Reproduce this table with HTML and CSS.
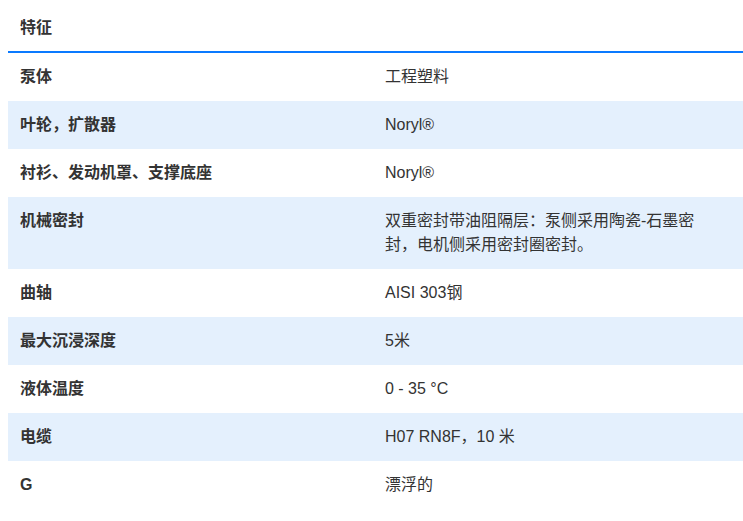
FILE: index.html
```html
<!DOCTYPE html>
<html lang="zh">
<head>
<meta charset="utf-8">
<link rel="stylesheet" href="styles.css">
</head>
<body>
<table class="spec">
  <colgroup>
    <col class="c1">
    <col class="c2">
  </colgroup>
  <thead>
    <tr><th class="head" colspan="2">特征</th></tr>
  </thead>
  <tbody>
    <tr><td class="k">泵体</td><td class="v">工程塑料</td></tr>
    <tr class="alt"><td class="k">叶轮，扩散器</td><td class="v">Noryl®</td></tr>
    <tr><td class="k">衬衫、发动机罩、支撑底座</td><td class="v">Noryl®</td></tr>
    <tr class="alt"><td class="k">机械密封</td><td class="v">双重密封带油阻隔层：泵侧采用陶瓷-石墨密封，电机侧采用密封圈密封。</td></tr>
    <tr><td class="k">曲轴</td><td class="v">AISI 303钢</td></tr>
    <tr class="alt"><td class="k">最大沉浸深度</td><td class="v">5米</td></tr>
    <tr><td class="k">液体温度</td><td class="v">0 - 35 °C</td></tr>
    <tr class="alt"><td class="k">电缆</td><td class="v">H07 RN8F，10 米</td></tr>
    <tr><td class="k">G</td><td class="v">漂浮的</td></tr>
  </tbody>
</table>
</body>
</html>
```

FILE: styles.css
```css
html, body {
  margin: 0;
  padding: 0;
  background: #fff;
}
body {
  padding: 8px 0 0 8px;
  font-family: "Liberation Sans", "Noto Sans CJK SC", sans-serif;
  font-size: 16px;
  color: #333;
}
.spec {
  width: 100%;
  border-collapse: collapse;
  table-layout: fixed;
}
.c1 {
  width: 365px;
}
.head {
  text-align: left;
  font-weight: 700;
  padding: 8px 12px 11px;
  line-height: 24px;
  border-bottom: 2px solid #0a7aff;
}
.spec td {
  padding: 12px;
  line-height: 24px;
  vertical-align: top;
}
.k {
  font-weight: 700;
}
.spec td.v {
  padding-right: 42px;
  font-weight: 400;
}
.alt {
  background: #e4f0fd;
}
```
